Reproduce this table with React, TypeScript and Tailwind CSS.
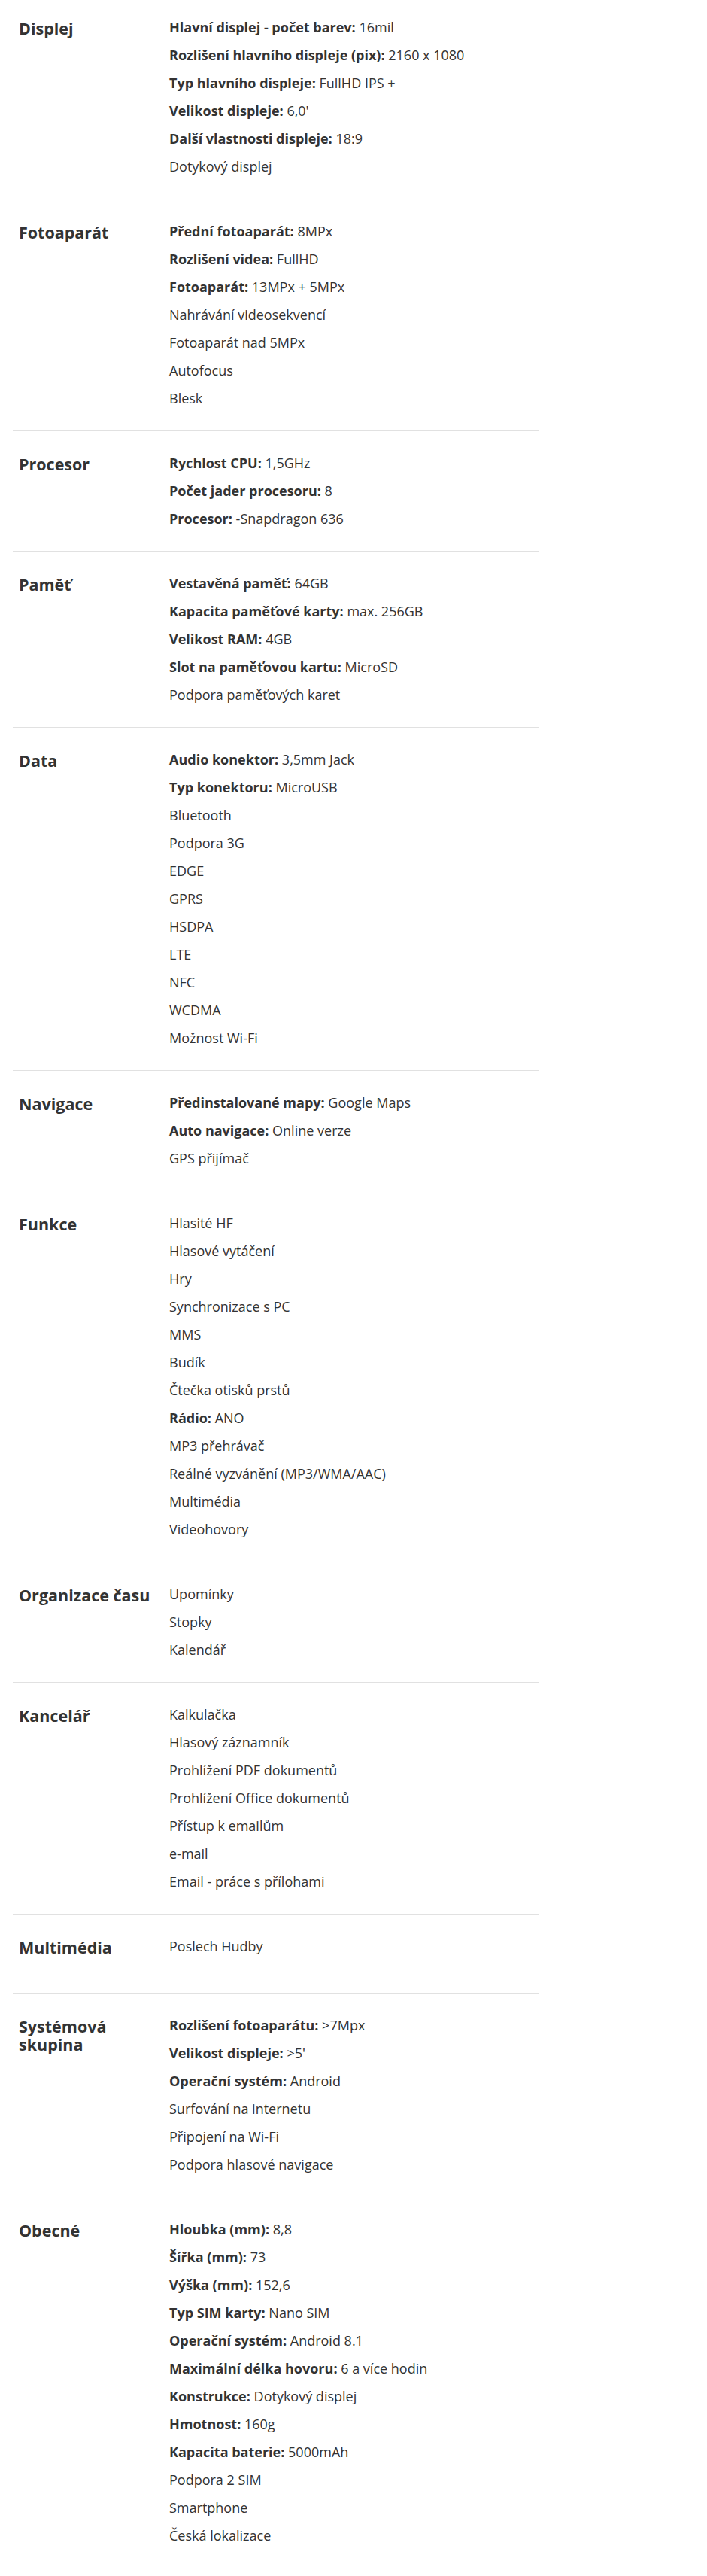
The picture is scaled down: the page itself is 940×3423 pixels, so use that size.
import React from "react";

type Item = { label?: string; value: string };
type Section = { title: string; items: Item[] };

const t = (value: string): Item => ({ value });
const kv = (label: string, value: string): Item => ({ label, value });

const sections: Section[] = [
  {
    title: "Displej",
    items: [
      kv("Hlavní displej - počet barev", "16mil"),
      kv("Rozlišení hlavního displeje (pix)", "2160 x 1080"),
      kv("Typ hlavního displeje", "FullHD IPS +"),
      kv("Velikost displeje", "6,0'"),
      kv("Další vlastnosti displeje", "18:9"),
      t("Dotykový displej"),
    ],
  },
  {
    title: "Fotoaparát",
    items: [
      kv("Přední fotoaparát", "8MPx"),
      kv("Rozlišení videa", "FullHD"),
      kv("Fotoaparát", "13MPx + 5MPx"),
      t("Nahrávání videosekvencí"),
      t("Fotoaparát nad 5MPx"),
      t("Autofocus"),
      t("Blesk"),
    ],
  },
  {
    title: "Procesor",
    items: [
      kv("Rychlost CPU", "1,5GHz"),
      kv("Počet jader procesoru", "8"),
      kv("Procesor", "-Snapdragon 636"),
    ],
  },
  {
    title: "Paměť",
    items: [
      kv("Vestavěná paměť", "64GB"),
      kv("Kapacita paměťové karty", "max. 256GB"),
      kv("Velikost RAM", "4GB"),
      kv("Slot na paměťovou kartu", "MicroSD"),
      t("Podpora paměťových karet"),
    ],
  },
  {
    title: "Data",
    items: [
      kv("Audio konektor", "3,5mm Jack"),
      kv("Typ konektoru", "MicroUSB"),
      t("Bluetooth"),
      t("Podpora 3G"),
      t("EDGE"),
      t("GPRS"),
      t("HSDPA"),
      t("LTE"),
      t("NFC"),
      t("WCDMA"),
      t("Možnost Wi-Fi"),
    ],
  },
  {
    title: "Navigace",
    items: [
      kv("Předinstalované mapy", "Google Maps"),
      kv("Auto navigace", "Online verze"),
      t("GPS přijímač"),
    ],
  },
  {
    title: "Funkce",
    items: [
      t("Hlasité HF"),
      t("Hlasové vytáčení"),
      t("Hry"),
      t("Synchronizace s PC"),
      t("MMS"),
      t("Budík"),
      t("Čtečka otisků prstů"),
      kv("Rádio", "ANO"),
      t("MP3 přehrávač"),
      t("Reálné vyzvánění (MP3/WMA/AAC)"),
      t("Multimédia"),
      t("Videohovory"),
    ],
  },
  {
    title: "Organizace času",
    items: [t("Upomínky"), t("Stopky"), t("Kalendář")],
  },
  {
    title: "Kancelář",
    items: [
      t("Kalkulačka"),
      t("Hlasový záznamník"),
      t("Prohlížení PDF dokumentů"),
      t("Prohlížení Office dokumentů"),
      t("Přístup k emailům"),
      t("e-mail"),
      t("Email - práce s přílohami"),
    ],
  },
  {
    title: "Multimédia",
    items: [t("Poslech Hudby")],
  },
  {
    title: "Systémová skupina",
    items: [
      kv("Rozlišení fotoaparátu", ">7Mpx"),
      kv("Velikost displeje", ">5'"),
      kv("Operační systém", "Android"),
      t("Surfování na internetu"),
      t("Připojení na Wi-Fi"),
      t("Podpora hlasové navigace"),
    ],
  },
  {
    title: "Obecné",
    items: [
      kv("Hloubka (mm)", "8,8"),
      kv("Šířka (mm)", "73"),
      kv("Výška (mm)", "152,6"),
      kv("Typ SIM karty", "Nano SIM"),
      kv("Operační systém", "Android 8.1"),
      kv("Maximální délka hovoru", "6 a více hodin"),
      kv("Konstrukce", "Dotykový displej"),
      kv("Hmotnost", "160g"),
      kv("Kapacita baterie", "5000mAh"),
      t("Podpora 2 SIM"),
      t("Smartphone"),
      t("Česká lokalizace"),
    ],
  },
];

export default function App() {
  return (
    <div className="min-h-screen bg-white font-['Open_Sans',sans-serif] text-[#333333]">
      <div className="ml-[17px] w-[700px]">
        {sections.map((s, i) => (
          <div
            key={s.title}
            className={
              "flex items-start " +
              (i === 0 ? "pt-[18px] " : "pt-6 ") +
              (i === sections.length - 1 ? "pb-6" : "pb-6 border-b border-[#e1e1e1]")
            }
          >
            <h3 className="w-[208px] shrink-0 pl-2 pr-[12px] pt-[8px] pb-6 text-[21.5px] font-bold leading-[24px] text-[#333333]">
              {s.title}
            </h3>
            <ul className="flex-1">
              {s.items.map((it, j) => (
                <li key={j} className="text-[18px] leading-[37px] whitespace-nowrap">
                  {it.label ? (
                    <>
                      <span className="font-bold">{it.label}:</span> {it.value}
                    </>
                  ) : (
                    it.value
                  )}
                </li>
              ))}
            </ul>
          </div>
        ))}
      </div>
    </div>
  );
}
